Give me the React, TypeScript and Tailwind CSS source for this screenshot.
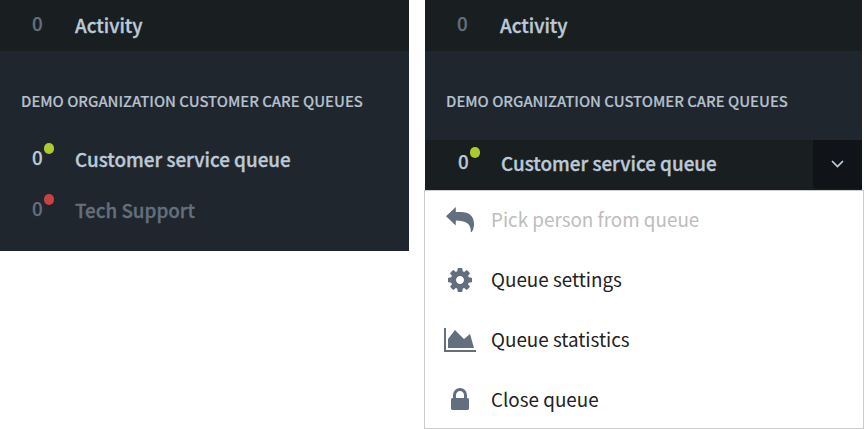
import React from "react";

const FONT = "font-['Noto_Sans_CJK_JP','Noto_Sans',sans-serif]";

function Count({ value, tone, dot }: { value: number; tone: string; dot?: string }) {
  return (
    <span className={`relative ml-8 w-[43px] shrink-0 text-[18.800px] leading-6 font-medium [-webkit-text-stroke:0.25px] ${tone}`}>
      {value}
      {dot && <span className={`absolute -top-[2px] left-3 h-[11px] w-[10px] rounded-full ${dot}`} />}
    </span>
  );
}

function Label({ tone, children }: { tone: string; children: React.ReactNode }) {
  return (
    <span className={`pt-px text-[18.850px] leading-[26px] font-medium whitespace-nowrap [-webkit-text-stroke:0.35px] ${tone}`}>
      {children}
    </span>
  );
}

function ActivityRow() {
  return (
    <div className="flex h-[51px] items-start bg-[#191e21] pt-[11px]">
      <Count value={0} tone="text-[#646f7c]" />
      <Label tone="text-[#bcc9d6]">Activity</Label>
    </div>
  );
}

function Heading() {
  return (
    <h2 className="h-[89px] pt-[39px] pl-[21px] text-[14.850px] leading-[22px] font-medium whitespace-nowrap text-[#b4c0cc] [-webkit-text-stroke:0.15px]">
      DEMO ORGANIZATION CUSTOMER CARE QUEUES
    </h2>
  );
}

function Glyph({ width, d, box }: { width: string; d: string; box: string }) {
  return (
    <svg className={`h-7 ${width} shrink-0`} viewBox={box} fill="#636f7e" aria-hidden="true">
      <path d={d} />
    </svg>
  );
}

function MenuItem({ label, muted, children }: { label: string; muted?: boolean; children: React.ReactNode }) {
  return (
    <li className="flex h-[60px] items-start pt-[15px]">
      <span className="ml-[17px] flex w-[35px] justify-center">{children}</span>
      <span className={`-mt-px ml-[14px] text-[18.830px] leading-[28px] whitespace-nowrap ${muted ? "text-[#bdbdbd]" : "text-[#222222]"}`}>
        {label}
      </span>
    </li>
  );
}

export default function App() {
  return (
    <div className={`flex h-[429px] w-[864px] items-start overflow-hidden bg-white ${FONT}`}>
      <section className="h-[251px] w-[409px] bg-[#20262e]">
        <ActivityRow />
        <Heading />
        <div className="flex h-[51px] items-start pt-[5px]">
          <Count value={0} tone="text-[#bcc9d6]" dot="bg-[#adca2e]" />
          <Label tone="text-[#bcc9d6]">Customer service queue</Label>
        </div>
        <div className="flex h-[51px] items-start pt-[5px]">
          <Count value={0} tone="text-[#646f7c]" dot="bg-[#c94242]" />
          <Label tone="text-[#646f7c]">Tech Support</Label>
        </div>
      </section>
      <section className="ml-[15px] w-[440px]">
        <div className="ml-px h-[190px] w-[437px] bg-[#20262e]">
          <ActivityRow />
          <Heading />
          <div className="flex h-[50px] items-start bg-[#191e21]">
            <div className="flex flex-1 pt-[9px] pl-px">
              <Count value={0} tone="text-[#bcc9d6]" dot="bg-[#adca2e]" />
              <Label tone="text-[#bcc9d6]">Customer service queue</Label>
            </div>
            <button className="flex h-[49px] w-[49px] items-center justify-center rounded-bl-sm bg-[#101419] pb-px" aria-label="Queue menu">
              <svg width="14" height="10" viewBox="0 0 14 10" fill="none" stroke="#c0cfde" strokeWidth="1.700">
                <path d="M1 2L6.500 7.500L12 2" />
              </svg>
            </button>
          </div>
        </div>
        <ul className="h-[239px] w-[440px] border border-[#cccccc] bg-white">
          <MenuItem label="Pick person from queue" muted>
            <svg className="h-[28px] w-7" viewBox="0 -1 28 28" fill="#636f7e" aria-hidden="true">
              <path d="M0 9.200L9.800 0V5.100H15C23.500 5.100 28 9.500 28 17C28 20 26.800 25.300 24.800 25.300C25.200 17 20 13.600 9.800 13.600V18.400Z" />
            </svg>
          </MenuItem>
          <MenuItem label="Queue settings">
            <Glyph
              width="w-7"
              box="0 0 1792 1792"
              d="M1152 896q0-106-75-181t-181-75-181 75-75 181 75 181 181 75 181-75 75-181zm512-109v222q0 12-8 23t-20 13l-185 28q-19 54-39 91 35 50 107 138 10 12 10 25t-9 23q-27 37-99 108t-94 71q-12 0-26-9l-138-108q-44 23-91 38-16 136-29 186-7 28-36 28h-222q-14 0-24.500-8.500t-11.500-21.500l-28-184q-49-16-90-37l-141 107q-10 9-25 9-14 0-25-11-126-114-165-168-7-10-7-23 0-12 8-23 15-21 51-66.500t54-70.500q-27-50-41-99l-183-27q-13-2-21-12.500t-8-23.500v-222q0-12 8-23t19-13l186-28q14-46 39-92-40-57-107-138-10-12-10-24 0-10 9-23 26-36 98.500-107.500t94.500-71.500q13 0 26 10l138 107q44-23 91-38 16-136 29-186 7-28 36-28h222q14 0 24.500 8.500t11.500 21.500l28 184q49 16 90 37l142-107q9-9 24-9 13 0 25 10 129 119 165 170 7 8 7 22 0 12-8 23-15 21-51 66.500t-54 70.500q26 50 41 98l183 28q13 2 21 12.500t8 23.500z"
            />
          </MenuItem>
          <MenuItem label="Queue statistics">
            <Glyph
              width="w-8"
              box="0 0 2048 1792"
              d="M2048 1536v128h-2048v-1536h128v1408h1920zm-384-1024l256 896h-1664v-576l448-576 576 576z"
            />
          </MenuItem>
          <MenuItem label="Close queue">
            <Glyph
              width="w-7"
              box="0 0 1792 1792"
              d="M640 768h512v-192q0-106-75-181t-181-75-181 75-75 181v192zm832 96v576q0 40-28 68t-68 28h-960q-40 0-68-28t-28-68v-576q0-40 28-68t68-28h32v-192q0-184 132-316t316-132 316 132 132 316v192h32q40 0 68 28t28 68z"
            />
          </MenuItem>
        </ul>
      </section>
    </div>
  );
}
